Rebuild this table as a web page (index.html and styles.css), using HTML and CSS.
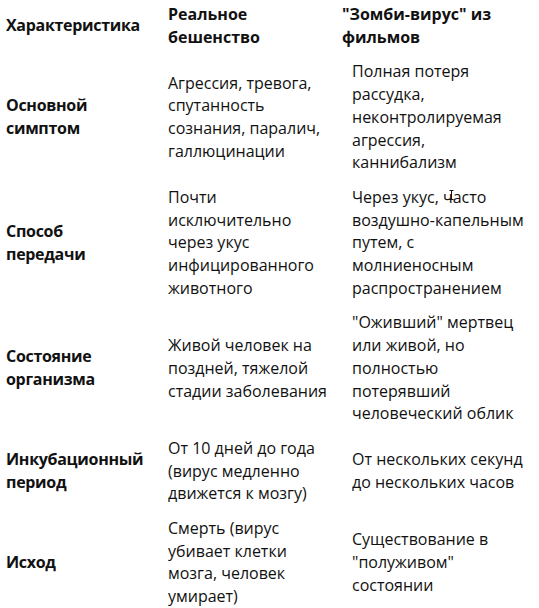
FILE: index.html
```
<!DOCTYPE html>
<html lang="ru">
<head>
<meta charset="utf-8">
<title>Бешенство и зомби-вирус</title>
<link rel="stylesheet" href="styles.css">
</head>
<body>
<table class="compare">
  <colgroup>
    <col class="c1"><col class="c2"><col class="c3">
  </colgroup>
  <thead>
    <tr>
      <th>Характеристика</th>
      <th>Реальное бешенство</th>
      <th>"Зомби-вирус" из фильмов</th>
    </tr>
  </thead>
  <tbody>
    <tr>
      <th>Основной симптом</th>
      <td>Агрессия, тревога, спутанность сознания, паралич, галлюцинации</td>
      <td>Полная потеря рассудка, неконтролируемая агрессия, каннибализм</td>
    </tr>
    <tr>
      <th>Способ передачи</th>
      <td>Почти исключительно через укус инфицированного животного</td>
      <td>Через укус, <span class="caret-host">часто<svg class="caret" viewBox="0 0 5 10" width="5" height="10" aria-hidden="true"><path d="M0.5 0.5 H4.5 M2.5 0.5 V9.5 M0.5 9.5 H4.5" fill="none" stroke="#111" stroke-width="1"/></svg></span> воздушно-капельным путем, с молниеносным распространением</td>
    </tr>
    <tr>
      <th>Состояние организма</th>
      <td>Живой человек на поздней, тяжелой стадии заболевания</td>
      <td>"Оживший" мертвец или живой, но полностью потерявший человеческий облик</td>
    </tr>
    <tr>
      <th>Инкубационный период</th>
      <td>От 10 дней до года (вирус медленно движется к мозгу)</td>
      <td>От нескольких секунд до нескольких часов</td>
    </tr>
    <tr>
      <th>Исход</th>
      <td>Смерть (вирус убивает клетки мозга, человек умирает)</td>
      <td>Существование в "полуживом" состоянии</td>
    </tr>
  </tbody>
</table>
</body>
</html>
```
FILE: styles.css
```
html, body {
  margin: 0;
  padding: 0;
  background: #ffffff;
}
body {
  font-family: "Open Sans", "Noto Sans", sans-serif;
  font-size: 16px;
  line-height: 22.7px;
  color: #111111;
}
.compare {
  width: 539px;
  border-collapse: collapse;
  table-layout: fixed;
}
.c1 { width: 162px; }
.c2 { width: 174px; }
.c3 { width: 203px; }
.compare th,
.compare td {
  padding: 6px 6px;
  text-align: left;
  vertical-align: middle;
}
.compare th {
  font-weight: 700;
}
.compare td {
  font-weight: 400;
}
.compare th:first-child {
  padding-right: 18px;
  letter-spacing: -0.3px;
}
.compare thead th {
  padding-top: 3px;
}
.compare tbody td:last-child {
  padding-left: 16px;
}
.caret-host {
  position: relative;
}
.caret {
  position: absolute;
  left: 6px;
  top: 4px;
}
```
